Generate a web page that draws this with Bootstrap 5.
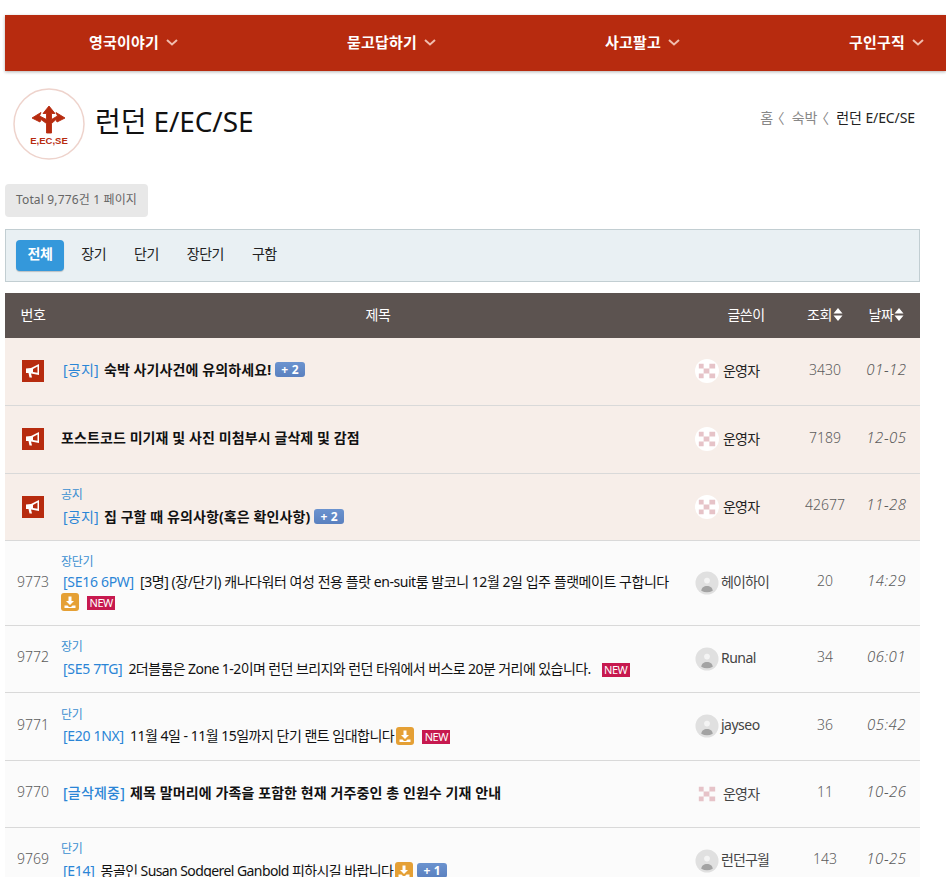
<!DOCTYPE html>
<html lang="ko">
<head>
<meta charset="utf-8">
<title>런던 E/EC/SE</title>
<link href="https://cdn.jsdelivr.net/npm/bootstrap@5.3.0/dist/css/bootstrap.min.css" rel="stylesheet">
<style>
html,body{overflow-x:hidden}
body{font-family:"Noto Sans","Noto Sans CJK KR",sans-serif;font-size:14px;color:#111;background:#fff;padding:15px 0 0 5px}
.topnav{background:#b72b0f;height:56px;gap:169px;padding-left:84px;padding-bottom:2px;box-shadow:0 1px 3px rgba(0,0,0,.3);white-space:nowrap;width:941px;overflow:hidden}
.topnav a{color:#fff;font-weight:700;font-size:15px;text-decoration:none;letter-spacing:.2px}
.topnav svg{margin-left:7px;margin-top:1px}
.wrapbox{width:915px}
.headrow{height:113px;padding:0 5px 8px 8px}
.logo{width:72px;height:72px;flex:none}
.pagetitle{font-size:28px;font-weight:400;margin:0 0 4px 10px;color:#111;letter-spacing:-.1px}
.crumbs{--bs-breadcrumb-divider:"〈";--bs-breadcrumb-margin-bottom:0;--bs-breadcrumb-item-padding-x:2.5px;font-size:14px;letter-spacing:-.1px;margin-bottom:12px}
.crumbs .breadcrumb-item,.crumbs .breadcrumb-item::before{color:#888}
.crumbs .breadcrumb-item+.breadcrumb-item::before{margin-left:-5px;margin-right:5px}
.crumbs .breadcrumb-item.active{color:#222}
.totalbox{display:inline-block;background:#e8e8e8;border-radius:4px;color:#666;font-size:12px;padding:0 11px;height:33px;line-height:31px;margin-bottom:12px;vertical-align:top;letter-spacing:.15px}
.filterbar{background:#e9f0f3;border:1px solid #c2ced2;height:53px;padding:0 10px;margin-bottom:11px}
.filterbar .btn{--bs-btn-font-size:14px;height:31px;line-height:27px;color:#222;border:0;border-radius:4px;letter-spacing:-.5px;padding:0 14px}
.filterbar .btn.on{background:#3498db;color:#fff;font-weight:700;padding:0 11.5px;margin-right:3.5px;box-shadow:0 1px 1px rgba(0,0,0,.2)}
.boardtable{table-layout:fixed;width:915px;margin:0;--bs-table-bg:transparent;font-size:14px}
.boardtable th{background:#5c5350;color:#fff;font-weight:400;height:45px;padding:0 0 2px;text-align:center;vertical-align:middle;border:0;letter-spacing:-.5px}
.boardtable th svg{margin-left:1px;vertical-align:-1px}
.boardtable td{height:67px;padding:0;vertical-align:middle;border-bottom:1px solid #d9d9d9;background:#fbfbfb;color:#5c5c5c}
.boardtable tr.pin td{background:#f7eee9}
.boardtable tr.tall td{height:85px}
.boardtable tr.rowplus td{height:68px}
.boardtable td.numcell,.boardtable td.hitcell{text-align:center;padding-bottom:4px;font-weight:300}
.boardtable tr.tall td.numcell{padding-bottom:2px}
.boardtable td.datecell{text-align:center;font-style:italic;font-size:15px;font-weight:300;letter-spacing:.5px;padding-bottom:4px}
.boardtable td.subj{color:#111;letter-spacing:-.5px;line-height:23px;white-space:nowrap;padding-bottom:3px}
.boardtable tr.tall td.subj{line-height:20px;padding-bottom:2px;letter-spacing:-.45px}
.boardtable td.subj.squeeze{letter-spacing:-.58px}
.catlabel{display:block;font-size:12px;color:#3a8fd1;line-height:20px;margin-top:2.5px;margin-bottom:-.5px;letter-spacing:-.3px}
.tall .catlabel{margin:0}
.subj b{font-weight:700;letter-spacing:.1px}
.tag{color:#2a85d6;margin:0 3px 0 2px;letter-spacing:-.3px}
.tag.hangul{letter-spacing:.2px;margin-right:2px}
.cntbadge{display:inline-block;background:linear-gradient(#6b93cf,#5a80bf);color:#fff;font-size:12px;font-weight:700;line-height:15px;height:15px;padding:0 6px;border-radius:3px;vertical-align:1px;letter-spacing:.2px;margin-left:1px}
.newbadge{display:inline-block;background:#c7194f;color:#fff;font-size:11px;line-height:14px;height:14px;width:28px;text-align:center;margin-left:5px;letter-spacing:-.5px}
.dl{display:inline-block;width:18px;height:18px;border-radius:3px;background:#e5a035;vertical-align:-4px;margin-left:2px}
.tall .dl{margin-left:0}
.dl svg{display:block}
.megabox{display:block;width:22px;height:22px;margin:0 auto 0 17px}
.who{color:#444;letter-spacing:-.5px;gap:2px}
.who span{padding-bottom:3px}
.who .kor{letter-spacing:-.9px}
.who .admin{color:#222;margin-left:2px;letter-spacing:-.8px;padding-bottom:1px}
.who .admin.plain{color:#444}
.ava{width:24px;height:24px;flex:none;display:block}
</style>
</head>
<body>

<nav class="topnav d-flex align-items-center">
  <a href="#" class="d-flex align-items-center">영국이야기<svg width="12" height="7" viewBox="0 0 12 7"><path d="M1 1l5 4.500L11 1" fill="none" stroke="#f0bdae" stroke-width="2"/></svg></a>
  <a href="#" class="d-flex align-items-center">묻고답하기<svg width="12" height="7" viewBox="0 0 12 7"><path d="M1 1l5 4.500L11 1" fill="none" stroke="#f0bdae" stroke-width="2"/></svg></a>
  <a href="#" class="d-flex align-items-center">사고팔고<svg width="12" height="7" viewBox="0 0 12 7"><path d="M1 1l5 4.500L11 1" fill="none" stroke="#f0bdae" stroke-width="2"/></svg></a>
  <a href="#" class="d-flex align-items-center">구인구직<svg width="12" height="7" viewBox="0 0 12 7"><path d="M1 1l5 4.500L11 1" fill="none" stroke="#f0bdae" stroke-width="2"/></svg></a>
</nav>

<div class="wrapbox">
  <div class="headrow d-flex align-items-center justify-content-between">
    <div class="d-flex align-items-center">
      <svg class="logo" viewBox="0 0 72 72">
        <circle cx="36" cy="36" r="35" fill="#fff" stroke="#eed3cc" stroke-width="1.500"/>
        <path fill="#b72b0f" stroke="#b72b0f" stroke-width=".9" stroke-linejoin="round" d="M36 18l6 7.500h-3.500v6l6-3.500-1.500-3.500 9 5.500-8 4-1-2.500-4.500 4v9.500h-5v-9.500l-5.500-4-1 2.500-8-4 9-5.500-1.500 3.500 7 3.500v-6H30z"/>
        <text x="36" y="56" text-anchor="middle" font-family="Liberation Sans, sans-serif" font-size="9.500" font-weight="700" fill="#b72b0f">E,EC,SE</text>
      </svg>
      <h1 class="pagetitle">런던 E/EC/SE</h1>
    </div>
    <ol class="breadcrumb crumbs">
      <li class="breadcrumb-item">홈</li>
      <li class="breadcrumb-item">숙박</li>
      <li class="breadcrumb-item active">런던 E/EC/SE</li>
    </ol>
  </div>

  <div><span class="totalbox">Total 9,776건 1 페이지</span></div>

  <div class="filterbar d-flex align-items-center">
    <a href="#" class="btn on">전체</a>
    <a href="#" class="btn">장기</a>
    <a href="#" class="btn">단기</a>
    <a href="#" class="btn">장단기</a>
    <a href="#" class="btn">구함</a>
  </div>

  <table class="table boardtable">
    <colgroup><col style="width:56px"><col style="width:634px"><col style="width:102px"><col style="width:56px"><col style="width:67px"></colgroup>
    <thead>
      <tr>
        <th>번호</th>
        <th>제목</th>
        <th>글쓴이</th>
        <th>조회<svg width="10" height="13" viewBox="0 0 10 13"><path d="M5 0l4.500 5.500H.5zM5 13L.5 7.500h9z" fill="#fff"/></svg></th>
        <th>날짜<svg width="10" height="13" viewBox="0 0 10 13"><path d="M5 0l4.500 5.500H.5zM5 13L.5 7.500h9z" fill="#fff"/></svg></th>
      </tr>
    </thead>
    <tbody>
      <tr class="pin">
        <td><svg class="megabox" viewBox="0 0 22 22"><rect width="22" height="22" fill="#b72b0f"/><path fill="#fff" fill-rule="evenodd" d="M4 8.500L9 8l8-4v11l-8-1.500 1 4H7.500l-1-4.500H4zM11 8.900l4.500-2.400v6.300l-4.500-.8z"/></svg></td>
        <td class="subj"><span class="tag hangul">[공지]</span> <b>숙박 사기사건에 유의하세요!</b> <span class="cntbadge">+ 2</span></td>
        <td><div class="who d-flex align-items-center"><svg class="ava" viewBox="0 0 25 25"><circle cx="12.500" cy="12.500" r="12.500" fill="#fff"/><path fill="#e6c3c8" d="M4 5h5v5H4zM15 5h6v5h-6zM9 10h6v5H9zM4 15h5v5H4zM15 15h6v5h-6z"/></svg><span class="admin">운영자</span></div></td>
        <td class="hitcell">3430</td>
        <td class="datecell">01-12</td>
      </tr>
      <tr class="pin rowplus">
        <td><svg class="megabox" viewBox="0 0 22 22"><rect width="22" height="22" fill="#b72b0f"/><path fill="#fff" fill-rule="evenodd" d="M4 8.500L9 8l8-4v11l-8-1.500 1 4H7.500l-1-4.500H4zM11 8.900l4.500-2.400v6.300l-4.500-.8z"/></svg></td>
        <td class="subj"><b>포스트코드 미기재 및 사진 미첨부시 글삭제 및 감점</b></td>
        <td><div class="who d-flex align-items-center"><svg class="ava" viewBox="0 0 25 25"><circle cx="12.500" cy="12.500" r="12.500" fill="#fff"/><path fill="#e6c3c8" d="M4 5h5v5H4zM15 5h6v5h-6zM9 10h6v5H9zM4 15h5v5H4zM15 15h6v5h-6z"/></svg><span class="admin">운영자</span></div></td>
        <td class="hitcell">7189</td>
        <td class="datecell">12-05</td>
      </tr>
      <tr class="pin">
        <td><svg class="megabox" viewBox="0 0 22 22"><rect width="22" height="22" fill="#b72b0f"/><path fill="#fff" fill-rule="evenodd" d="M4 8.500L9 8l8-4v11l-8-1.500 1 4H7.500l-1-4.500H4zM11 8.900l4.500-2.400v6.300l-4.500-.8z"/></svg></td>
        <td class="subj"><span class="catlabel">공지</span><span class="tag hangul">[공지]</span> <b>집 구할 때 유의사항(혹은 확인사항)</b> <span class="cntbadge">+ 2</span></td>
        <td><div class="who d-flex align-items-center"><svg class="ava" viewBox="0 0 25 25"><circle cx="12.500" cy="12.500" r="12.500" fill="#fff"/><path fill="#e6c3c8" d="M4 5h5v5H4zM15 5h6v5h-6zM9 10h6v5H9zM4 15h5v5H4zM15 15h6v5h-6z"/></svg><span class="admin">운영자</span></div></td>
        <td class="hitcell">42677</td>
        <td class="datecell">11-28</td>
      </tr>
      <tr class="tall">
        <td class="numcell">9773</td>
        <td class="subj"><span class="catlabel">장단기</span><span class="tag">[SE16 6PW]</span> [3명] (장/단기) 캐나다워터 여성 전용 플랏 en-suit룸 발코니 12월 2일 입주 플랫메이트 구합니다<br><span class="dl"><svg width="18" height="18" viewBox="0 0 18 18"><path fill="#fff" d="M7.500 3.500h3v4.500h2.500L9 12 5 8h2.500zM3.500 12.500h3l1.500 1.500h2l1.500-1.500h3v2.500h-11z"/></svg></span> <span class="newbadge">NEW</span></td>
        <td><div class="who d-flex align-items-center"><svg class="ava" viewBox="0 0 25 25"><circle cx="12.500" cy="12.500" r="12" fill="#e0e0e0"/><circle cx="12.500" cy="10" r="3" fill="#f4f4f4"/><path fill="#a3a3a3" d="M6.500 20.500c.3-3.500 2.800-5 6-5s5.700 1.500 6 5a12 12 0 0 1-12 0z"/></svg><span class="kor">헤이하이</span></div></td>
        <td class="hitcell">20</td>
        <td class="datecell">14:29</td>
      </tr>
      <tr>
        <td class="numcell">9772</td>
        <td class="subj squeeze"><span class="catlabel">장기</span><span class="tag">[SE5 7TG]</span> 2더블룸은 Zone 1-2이며 런던 브리지와 런던 타워에서 버스로 20분 거리에 있습니다. <span class="newbadge ms-2">NEW</span></td>
        <td><div class="who d-flex align-items-center"><svg class="ava" viewBox="0 0 25 25"><circle cx="12.500" cy="12.500" r="12" fill="#e0e0e0"/><circle cx="12.500" cy="10" r="3" fill="#f4f4f4"/><path fill="#a3a3a3" d="M6.500 20.500c.3-3.500 2.800-5 6-5s5.700 1.500 6 5a12 12 0 0 1-12 0z"/></svg><span>Runal</span></div></td>
        <td class="hitcell">34</td>
        <td class="datecell">06:01</td>
      </tr>
      <tr class="rowplus">
        <td class="numcell">9771</td>
        <td class="subj"><span class="catlabel">단기</span><span class="tag">[E20 1NX]</span> 11월 4일 - 11월 15일까지 단기 랜트 임대합니다<span class="dl"><svg width="18" height="18" viewBox="0 0 18 18"><path fill="#fff" d="M7.500 3.500h3v4.500h2.500L9 12 5 8h2.500zM3.500 12.500h3l1.500 1.500h2l1.500-1.500h3v2.500h-11z"/></svg></span> <span class="newbadge">NEW</span></td>
        <td><div class="who d-flex align-items-center"><svg class="ava" viewBox="0 0 25 25"><circle cx="12.500" cy="12.500" r="12" fill="#e0e0e0"/><circle cx="12.500" cy="10" r="3" fill="#f4f4f4"/><path fill="#a3a3a3" d="M6.500 20.500c.3-3.500 2.800-5 6-5s5.700 1.500 6 5a12 12 0 0 1-12 0z"/></svg><span>jayseo</span></div></td>
        <td class="hitcell">36</td>
        <td class="datecell">05:42</td>
      </tr>
      <tr>
        <td class="numcell">9770</td>
        <td class="subj"><span class="tag hangul fw-medium">[글삭제중]</span> <b>제목 말머리에 가족을 포함한 현재 거주중인 총 인원수 기재 안내</b></td>
        <td><div class="who d-flex align-items-center"><svg class="ava" viewBox="0 0 25 25"><circle cx="12.500" cy="12.500" r="12.500" fill="#fbfbfb"/><path fill="#e6c3c8" d="M4 5h5v5H4zM15 5h6v5h-6zM9 10h6v5H9zM4 15h5v5H4zM15 15h6v5h-6z"/></svg><span class="admin plain">운영자</span></div></td>
        <td class="hitcell">11</td>
        <td class="datecell">10-26</td>
      </tr>
      <tr>
        <td class="numcell">9769</td>
        <td class="subj squeeze"><span class="catlabel">단기</span><span class="tag">[E14]</span> 몽골인 Susan Sodgerel Ganbold 피하시길 바랍니다<span class="dl"><svg width="18" height="18" viewBox="0 0 18 18"><path fill="#fff" d="M7.500 3.500h3v4.500h2.500L9 12 5 8h2.500zM3.500 12.500h3l1.500 1.500h2l1.500-1.500h3v2.500h-11z"/></svg></span> <span class="cntbadge">+ 1</span></td>
        <td><div class="who d-flex align-items-center"><svg class="ava" viewBox="0 0 25 25"><circle cx="12.500" cy="12.500" r="12" fill="#e0e0e0"/><circle cx="12.500" cy="10" r="3" fill="#f4f4f4"/><path fill="#a3a3a3" d="M6.500 20.500c.3-3.500 2.800-5 6-5s5.700 1.500 6 5a12 12 0 0 1-12 0z"/></svg><span class="kor">런던구월</span></div></td>
        <td class="hitcell">143</td>
        <td class="datecell">10-25</td>
      </tr>
    </tbody>
  </table>
</div>

<script src="https://cdn.jsdelivr.net/npm/bootstrap@5.3.0/dist/js/bootstrap.bundle.min.js"></script>
</body>
</html>
